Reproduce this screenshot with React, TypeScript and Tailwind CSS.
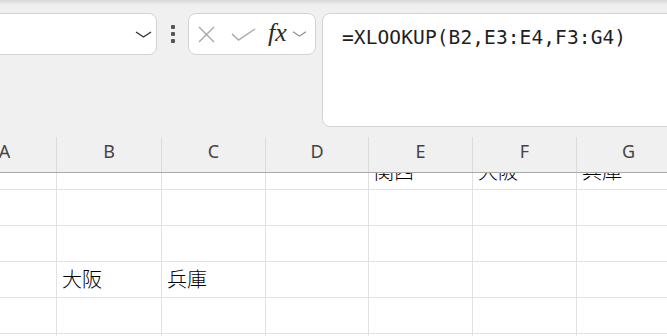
import React from "react";

const cols = ["A", "B", "C", "D", "E", "F", "G"];
const widths: Record<string, string> = {
  A: "w-[104px]",
  B: "w-[105px]",
  C: "w-[104px]",
  D: "w-[103px]",
  E: "w-[104px]",
  F: "w-[104px]",
  G: "w-[104px]",
};

const rows: Record<string, string>[] = [
  { E: "関西", F: "大阪", G: "兵庫" },
  {},
  {},
  { B: "大阪", C: "兵庫" },
  {},
  {},
];

const cjk = "font-['Noto_Sans_CJK_JP','Noto_Sans_CJK_SC',sans-serif] font-light";

const Chevron = ({ className }: { className: string }) => (
  <svg viewBox="0 0 17 7" className={className} fill="none" stroke="currentColor" strokeWidth="1.4">
    <polyline points="1 1 8.5 6 16 1" />
  </svg>
);

const GridRow = ({ data, first }: { data: Record<string, string>; first?: boolean }) => (
  <div className={`flex border-b border-[#e1e1e1] -ml-[47px] ${first ? "h-[17px] items-end overflow-hidden" : "h-[36px]"}`}>
    {cols.map((c) => (
      <div key={c} className={`${widths[c]} h-[35px] shrink-0 border-r border-[#e1e1e1] flex items-center pl-[5px] pb-[2px]`}>
        <span className={`${cjk} text-[20px] text-black leading-none`}>{data[c] ?? ""}</span>
      </div>
    ))}
  </div>
);

const App: React.FC = () => {
  return (
    <div className="w-[667px] h-[336px] overflow-hidden bg-[#f0f0f0] font-['Noto_Sans','Liberation_Sans',sans-serif]">
      <div className="h-[5px] bg-gradient-to-b from-[#d8d8d8] to-[#f0f0f0]" />
      <div className="h-[125px] flex items-start pt-[8px]">
        {/* name box */}
        <div className="-ml-[14px] w-[171px] h-[42px] bg-white border border-[#d3d3d3] rounded-lg flex items-center justify-end pr-[4px]">
          <Chevron className="w-[17px] h-[7px] text-[#333]" />
        </div>
        {/* more dots */}
        <div className="w-[31px] h-[42px] flex flex-col items-center justify-center gap-[3px]">
          <span className="w-[4px] h-[4px] bg-[#555] rounded-[1px]" />
          <span className="w-[4px] h-[4px] bg-[#555] rounded-[1px]" />
          <span className="w-[4px] h-[4px] bg-[#555] rounded-[1px]" />
        </div>
        {/* cancel / enter / fx */}
        <div className="w-[128px] h-[42px] bg-white border border-[#d3d3d3] rounded-lg flex items-center pl-[9px]">
          <svg viewBox="0 0 17 17" className="w-[17px] h-[17px] text-[#a9a9a9]" fill="none" stroke="currentColor" strokeWidth="1.4">
            <line x1="1" y1="1" x2="16" y2="16" />
            <line x1="16" y1="1" x2="1" y2="16" />
          </svg>
          <svg viewBox="0 0 25 13" className="ml-[16px] w-[25px] h-[13px] text-[#a9a9a9]" fill="none" stroke="currentColor" strokeWidth="1.4">
            <polyline points="1 6 7.5 12 24 1" />
          </svg>
          <span className="ml-[12px] font-['Liberation_Serif',serif] italic text-[26px] leading-none text-[#2b2b2b] -mt-[2px]">fx</span>
          <Chevron className="ml-[5px] w-[15px] h-[6px] text-[#8a8a8a]" />
        </div>
        {/* formula bar */}
        <div className="ml-[6px] flex-1 -mr-[20px] h-[114px] bg-white border border-[#d3d3d3] rounded-lg pl-[19px] pt-[9px]">
          <span className="font-['DejaVu_Sans_Mono','Liberation_Mono',monospace] text-[19.5px] text-[#1f1f1f] tracking-[0.1px]">
            =XLOOKUP(B2,E3:E4,F3:G4)
          </span>
        </div>
      </div>
      {/* column headers */}
      <div className="h-[43px] flex -ml-[47px] border-b border-[#a9a9a9]">
        {cols.map((c) => (
          <div key={c} className={`${widths[c]} shrink-0 flex`}>
            <div className="flex-1 flex items-center justify-center pt-[1px] text-[18px] text-[#444]">{c}</div>
            <div className="w-px mt-[7px] bg-[#dcdcdc]" />
          </div>
        ))}
      </div>
      <div className="bg-white">
        {rows.map((r, i) => (
          <GridRow key={i} data={r} first={i === 0} />
        ))}
      </div>
    </div>
  );
};

export default App;
